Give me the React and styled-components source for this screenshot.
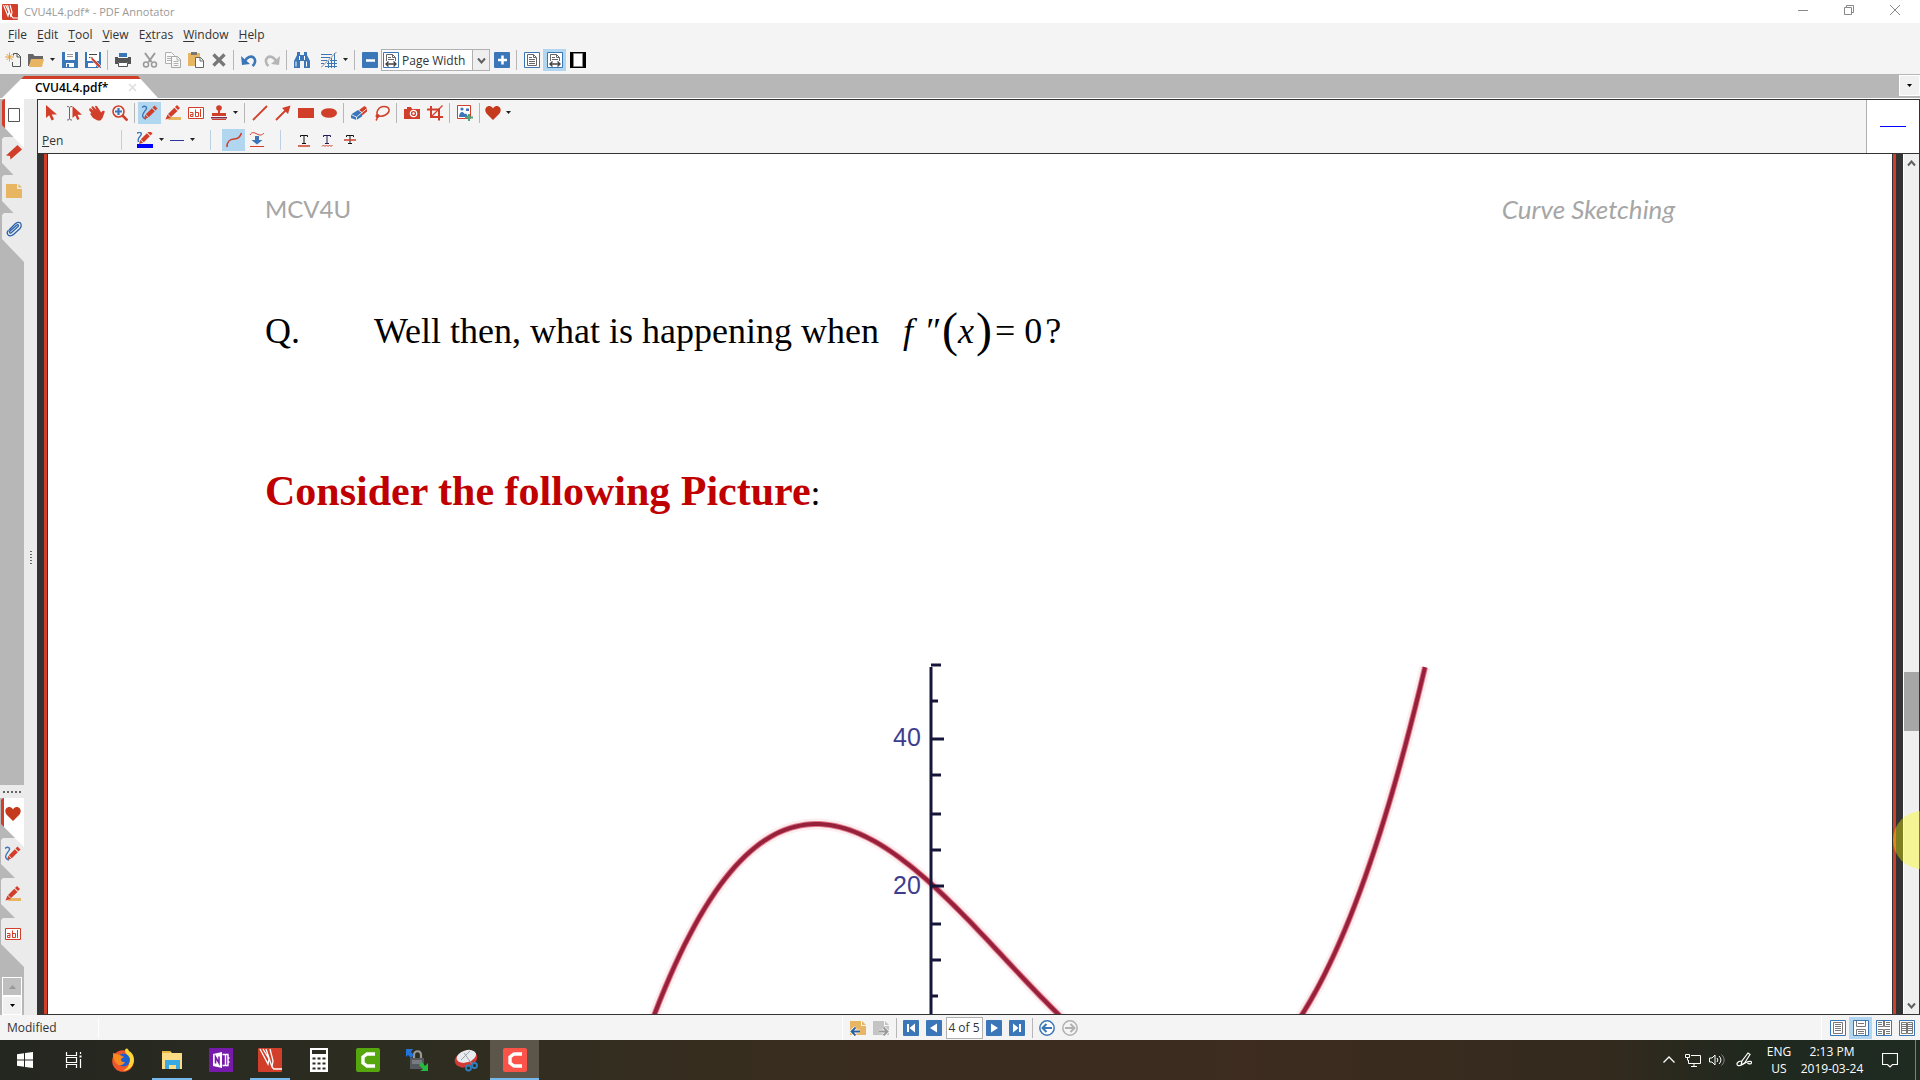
import React from "react";
import styled, { createGlobalStyle } from "styled-components";

const RED = "#d13f2a";
const BLUE = "#3a76b8";
const DARK = "#333333";
const LIT = "#b1d6f0";

const GlobalStyle = createGlobalStyle`
    * {
        box-sizing: border-box;
    }
    body {
        margin: 0;
        overflow: hidden;
        font-family: "Open Sans", "Noto Sans", sans-serif;
        font-size: 12px;
        color: #333;
    }
    button, select, input {
        font: inherit;
        color: inherit;
        border: 0;
        padding: 0;
        margin: 0;
        background: transparent;
    }
    svg {
        display: block;
        flex: none;
    }
`;

/* ---------- icons ---------- */

const Svg = ({ size = 16, box = 16, children }) => (
    <svg width={size} height={size} viewBox={`0 0 ${box} ${box}`} fill="none" aria-hidden="true">
        {children}
    </svg>
);

const Pencil = ({ x = 0, y = 0 }) => (
    <g transform={`translate(${x} ${y})`}>
        <path d="M12.5 0.5l3 3-2 2-3-3z" fill={RED} />
        <path d="M9.8 3.2l3 3-6 6-3-3z" fill={RED} />
        <path d="M3.2 9.8l3 3-4.2 1.2z" fill={RED} />
    </g>
);

const PageLines = () => (
    <>
        <path d="M.5.5h15v15H.5z" fill="#fff" stroke={BLUE} />
        <path d="M3.5 13.5v-11h6l3 3v8z" fill="#fff" stroke="#666" />
        <path d="M9.5 2.5v3h3M5 5.5h3M5 7.5h6M5 9.5h6M5 11.5h6" stroke="#666" />
    </>
);

const WidthLines = () => (
    <>
        <path d="M.5.5h15v15H.5z" fill="#fff" stroke={BLUE} />
        <path d="M3.5 9V2.5h6l3 3V9" stroke="#666" />
        <path d="M9.5 2.5v3h3M5 5.5h3M5 7.5h6" stroke="#666" />
        <path d="M3 12h10M5.5 9.5L3 12l2.5 2.5M10.5 9.5L13 12l-2.5 2.5" stroke="#444" strokeWidth="1.4" />
    </>
);

const icons = {
    app: (
        <>
            <rect width="16" height="16" rx="1" fill={RED} />
            <path d="M1.500 1l4.500 11 1-4-3.500-7M5.500 1l3.500 12 1-5-2-7M9.500 12l1.500 2h5" stroke="#fff" strokeWidth="1.1" />
        </>
    ),
    newDoc: (
        <>
            <path d="M8.5 3.5v-2h4l3 3v10h-8V10" stroke="#555" />
            <path d="M12 1.5V5h3.5" stroke="#555" />
            <path d="M4.5.5v9M0 5h9M1.5 2l6 6M7.5 2l-6 6" stroke="#e9a23b" />
        </>
    ),
    open: (
        <>
            <path d="M0 14V2h5l1.5 2H15v3H4l-3 7z" fill="#666" />
            <path d="M3 7h13l-2 8H1z" fill="#e8b563" />
        </>
    ),
    save: (
        <>
            <path d="M0 0h16v16H0z" fill={BLUE} />
            <path d="M3 0h10v8H3zM4 11h8v4H4z" fill="#fff" />
            <path d="M5 2.5h6M5 4.5h6" stroke="#999" />
            <path d="M5 12h2v3H5z" fill={BLUE} />
        </>
    ),
    saveMark: (
        <>
            <path d="M0 0h16v16H0z" fill={BLUE} />
            <path d="M2 0h12v9H2zM3 11h8v4H3z" fill="#fff" />
            <path d="M4 2.5h8M4 5.5h4" stroke="#444" />
            <path d="M5 4l1.500 4 7.500 8 2-2-8-8z" fill={RED} stroke="#fff" strokeWidth=".6" />
        </>
    ),
    print: (
        <>
            <path d="M4 1h8v4H4z" fill={BLUE} />
            <path d="M0 5h3v1h10V5h3v7h-3v-2H3v2H0z" fill="#555" />
            <path d="M3.5 10.5h9v4h-9z" fill="#fff" stroke="#555" />
        </>
    ),
    cut: (
        <>
            <path d="M3 1l6.5 9M13 1L6.5 10" stroke="#999" strokeWidth="2" />
            <circle cx="4" cy="12.5" r="2.5" stroke="#999" strokeWidth="1.5" />
            <circle cx="12" cy="12.5" r="2.5" stroke="#999" strokeWidth="1.5" />
        </>
    ),
    copy: (
        <>
            <path d="M.5.5h6l3 3v8h-9z" fill="#fafafa" stroke="#b0b0b0" />
            <path d="M6.5 4.5h6l3 3v8h-9z" fill="#fafafa" stroke="#a5a5a5" />
            <path d="M2 4.5h4M2 6.5h4M2 8.5h4M8.5 9.5h5M8.5 11.5h5M8.5 13.5h5M12 4.5V8h3.5" stroke="#b0b0b0" />
        </>
    ),
    paste: (
        <>
            <path d="M0 1h12v13H0z" fill="#e8b563" />
            <path d="M3 0h6v3H3z" fill="#777" />
            <path d="M7.5 5.5h5l3 3v7h-8z" fill="#fff" stroke="#666" />
            <path d="M12 5.5V9h3.5" stroke="#666" />
        </>
    ),
    del: <path d="M2.5 2.5l11 11M13.5 2.5l-11 11" stroke="#777" strokeWidth="3.2" />,
    undo: (
        <>
            <path d="M4 9C6 5 10 3.5 12.5 5.5s2 6-1 8.5" stroke={BLUE} strokeWidth="2.6" />
            <path d="M0 4l1 9 8-1z" fill={BLUE} />
        </>
    ),
    redo: (
        <>
            <path d="M12 9C10 5 6 3.5 3.5 5.5s-2 6 1 8.5" stroke="#b5b5b5" strokeWidth="2.6" />
            <path d="M16 4l-1 9-8-1z" fill="#b5b5b5" />
        </>
    ),
    find: (
        <>
            <path d="M3 0h3v3h4V0h3v3l3 6v7h-6V9H6v7H0V9l3-6z" fill={BLUE} />
            <path d="M2 9.5v5M12.5 9.5v5M5.500 4v4M10.5 4v4" stroke="#fff" />
        </>
    ),
    snap: (
        <>
            <path d="M0 2.5h11M0 5.5h9M0 8.5h6M0 11.5h3M13.5 1v15M10.5 6v10M7.5 9v7M4 14.5h12M6 11.5h10M9 8.5h7" stroke={BLUE} />
            <path d="M15.500 0L0 15.500" stroke="#888" />
        </>
    ),
    minus: (
        <>
            <rect width="16" height="16" rx="1" fill={BLUE} />
            <path d="M4 8.5h9" stroke="#fff" strokeWidth="2.5" />
        </>
    ),
    plus: (
        <>
            <rect width="16" height="16" rx="1" fill={BLUE} />
            <path d="M4 8h9M8.5 3.5v9" stroke="#fff" strokeWidth="2.5" />
        </>
    ),
    fitPage: <PageLines />,
    fitWidth: <WidthLines />,
    fullScreen: (
        <>
            <path d="M0 0h16v16H0z" fill="#000" />
            <path d="M3.5 1.5h9v13h-9z" fill="#fff" stroke="#888" />
        </>
    ),
    select: <path d="M3 0v13l3.2-2.8L8.5 15.5l2.6-1.2-2.4-4.8H14z" fill={RED} />,
    textSelect: (
        <>
            <path d="M1 1.5c1.5 0 2 .4 2.5 1 .5-.6 1-1 2.5-1M1 15c1.5 0 2-.4 2.5-1 .5.6 1 1 2.5 1M3.5 2.5V14" stroke="#666" />
            <path d="M6.5 1v12l2.8-2.5 2 4.5 2.2-1-2-4.3H16z" fill={RED} />
        </>
    ),
    hand: (
        <path
            d="M.5 3.5c1-.8 2 .2 4 2.3L2.5 2.500c0-1.500 1.500-1.500 2.300-.4L7.500 5 6 1.500C6.200.3 7.500.5 8.200 1.500l3 4.500 1 1.500c1-2 3.300-2.300 3.600-.7L13.500 13l-2 2.500H8.500L4 13 1.500 9.500c-.5-1 .3-1.500 1.200-1L.8 6C0 5 0 4 .5 3.500z"
            fill={RED}
        />
    ),
    zoomIn: (
        <>
            <circle cx="6.5" cy="6.5" r="5.5" stroke={RED} strokeWidth="1.6" />
            <path d="M10.5 10.5l5 5" stroke={RED} strokeWidth="2.6" />
            <path d="M3 6.5h7M6.5 3v7" stroke={BLUE} strokeWidth="2.2" />
        </>
    ),
    pen: (
        <>
            <path d="M0 2.500c3-2.500 5.500-.5 4 2S-.5 9 1 12c.5 1 1.500 2 3 2" stroke={BLUE} strokeWidth="1.4" />
            <Pencil />
        </>
    ),
    penColor: (
        <>
            <path d="M0 1.500c3-2.500 5-.5 4 1.500S0 6 1.500 10" stroke={BLUE} strokeWidth="1.4" />
            <Pencil y={-2} />
            <path d="M0 12h16v4H0z" fill="#0000ff" />
        </>
    ),
    marker: (
        <>
            <path d="M5 12h11v3H3z" fill="#e8b563" />
            <path d="M12 0l3 3-2 2-3-3zM9.3 2.7l3.2 3.2-6.500 6-3-3z" fill={RED} />
            <path d="M2.5 9.5L6 13 .5 14.500z" fill={RED} />
        </>
    ),
    textBox: (
        <>
            <path d="M.5 2.5h15v11H.5z" fill="#fff" stroke={RED} />
            <path d="M2 7.5h3v4H2.5v-2H5M7.5 4.5v7h3v-4h-3M12.5 4v8" stroke={RED} />
        </>
    ),
    stamp: (
        <>
            <circle cx="8" cy="3" r="2.8" fill={RED} />
            <path d="M7 5h2v3h6v3H1V8h6z" fill={RED} />
            <path d="M0 12h16v1.5H0z" fill="#7b2a52" />
            <path d="M1 14.5h14" stroke={RED} />
        </>
    ),
    line: <path d="M1 15L15 1" stroke={RED} strokeWidth="1.8" />,
    arrow: (
        <>
            <path d="M1 15L11 5" stroke={RED} strokeWidth="1.8" />
            <path d="M15.5.5L13 9 7 3z" fill={RED} />
        </>
    ),
    rect: <path d="M0 3h16v10H0z" fill={RED} />,
    ellipse: <ellipse cx="8" cy="8" rx="8" ry="4.8" fill={RED} />,
    eraser: (
        <>
            <path d="M8 5l5.500-4L16 3v3.500L11 10.500 7 7z" fill={RED} />
            <path d="M0 9.500L7 5l4 3v3.500L5.500 15 0 13z" fill={BLUE} />
            <path d="M0 9.500l5.500 2.500L16 3.500M5.500 12v3M7.500 5l4 3" stroke="#fff" strokeWidth=".8" />
        </>
    ),
    lasso: (
        <>
            <path d="M4 10.5C1.5 8 4 1.5 10 1.5c6.5 0 6.500 6 1.500 8.500-3 1.500-5.500 1.500-7.500.5zM3.500 10.500C3 12 4 13 2 15.500" stroke={RED} strokeWidth="1.5" />
            <circle cx="3.5" cy="11" r="2" fill={RED} />
        </>
    ),
    camera: (
        <>
            <path d="M0 4h3V2h4l1 2h8v10H0z" fill={RED} />
            <circle cx="9.5" cy="8.5" r="3.2" stroke="#fff" strokeWidth="1.2" />
            <circle cx="9.5" cy="8.5" r="1.2" fill="#fff" />
        </>
    ),
    crop: (
        <>
            <path d="M0 4.5h12v11M4 1v11h12" stroke={RED} strokeWidth="2" />
            <path d="M4 12L15.5.5" stroke={RED} strokeWidth="1.3" />
        </>
    ),
    image: (
        <>
            <path d="M.5.5h13v13H.5z" fill="#fff" stroke={RED} />
            <path d="M2 12c0-3 1.500-5 3-5s2 1 2.500 2L9 8.500l2.500 3.500z" fill={BLUE} />
            <circle cx="5" cy="4" r="1.6" fill={BLUE} />
            <path d="M9 3.5h3V6H9z" fill={BLUE} />
            <path d="M8 12.5h8M12 9v7" stroke="#4aa87c" strokeWidth="2" />
        </>
    ),
    heart: <path d="M8 15L1.5 8.5C-.5 6 0 2.500 2.500 1.500 5 .5 7 1.500 8 3.500c1-2 3-3 5.500-2C16 2.500 16.500 6 14.500 8.500z" fill="#c5391c" />,
    lineWidth: <path d="M1 8.5h14" stroke="#33339c" />,
    curve: <path d="M1 15C1 9 3.5 7.500 8 7s6-2 7.500-6" stroke={RED} strokeWidth="1.6" />,
    press: (
        <>
            <path d="M1 3C3-.5 5 .5 8 2s5 1.5 7-1" stroke={RED} />
            <path d="M6 4h4v4h3.5L8 12.500 2.500 8H6z" fill={BLUE} />
            <path d="M1 14.5h14" stroke={RED} />
        </>
    ),
    underline: (
        <>
            <path d="M4.500 5V3.500h7V5M8 3.500v8M6 11.500h4" stroke="#111" />
            <path d="M2 14h12" stroke={RED} strokeWidth="1.5" />
        </>
    ),
    squiggle: (
        <>
            <path d="M4.500 5V3.500h7V5M8 3.500v8M6 11.500h4" stroke="#221a55" />
            <path d="M3 14.500l1.500-1.500L6 14.500 7.500 13 9 14.500l1.500-1.500 1.500 1.500 1.500-1.500" stroke={RED} />
        </>
    ),
    strike: (
        <>
            <path d="M4.500 5V3.500h7V5M8 3.500v8M6 11.500h4" stroke="#111" />
            <path d="M2 8h12" stroke={RED} strokeWidth="1.5" />
        </>
    ),
    thumbs: <path d="M2.5 1.5h11v13h-11z" fill="#fff" stroke="#555" />,
    bookmark: <path d="M11.5 0L16 4.5 4.500 14.500 4 11 0 10.500z" fill={RED} />,
    note: (
        <>
            <path d="M0 1h11v5h5v9H0z" fill="#e8b563" />
            <path d="M12.5 1L16 4.5h-3.5z" fill="#e8b563" />
        </>
    ),
    clip: (
        <path
            d="M3 9l6-6c2-2 4.500-2 5.500-.8S15.500 6 14 7.500l-6.500 6c-2 1.800-4.500 1.500-5.500.3s-1-3 .5-4.600M5 12l7-6.500c1-1 0-2.500-1.200-1.500L4 10c-1 1.200 0 2.800 1 2z"
            stroke="#2a62ad"
            strokeWidth="1.3"
        />
    ),
    pageBack: (
        <>
            <path d="M0 1h11v5h5v9H0z" fill="#e8b563" />
            <path d="M12 1l4 4h-4z" fill="#e8b563" />
            <path d="M10 11.5H2M5.5 7.500l-4 4 4 4" stroke="#fff" strokeWidth="3.5" />
            <path d="M10 11.5H2M5.5 7.500l-4 4 4 4" stroke="#2a5f9e" strokeWidth="1.8" />
        </>
    ),
    pageForward: (
        <>
            <path d="M0 1h11v5h5v9H0z" fill="#c4c4c4" />
            <path d="M12 1l4 4h-4z" fill="#c4c4c4" />
            <path d="M6 11.5h8M10.5 7.500l4 4-4 4" stroke="#f4f4f4" strokeWidth="3.5" />
            <path d="M6 11.5h8M10.5 7.500l4 4-4 4" stroke="#999" strokeWidth="1.8" />
        </>
    ),
    first: (
        <>
            <rect width="16" height="16" rx="1" fill={BLUE} />
            <path d="M4 4h2v8H4zM12 3.5v9L6.500 8z" fill="#fff" />
        </>
    ),
    prev: (
        <>
            <rect width="16" height="16" rx="1" fill={BLUE} />
            <path d="M11 3.5v9L4 8z" fill="#fff" />
        </>
    ),
    next: (
        <>
            <rect width="16" height="16" rx="1" fill={BLUE} />
            <path d="M5 3.5v9L12 8z" fill="#fff" />
        </>
    ),
    last: (
        <>
            <rect width="16" height="16" rx="1" fill={BLUE} />
            <path d="M10 4h2v8h-2zM4 3.5v9L9.500 8z" fill="#fff" />
        </>
    ),
    back: (
        <>
            <circle cx="8" cy="8" r="7.2" fill="#fff" stroke={BLUE} strokeWidth="1.5" />
            <path d="M13 8H4M7.5 4l-4 4 4 4" stroke={BLUE} strokeWidth="2" />
        </>
    ),
    forward: (
        <>
            <circle cx="8" cy="8" r="7.2" stroke="#b0b0b0" strokeWidth="1.5" />
            <path d="M3 8h9M8.5 4l4 4-4 4" stroke="#b0b0b0" strokeWidth="2" />
        </>
    ),
    single: (
        <>
            <path d="M.5.5h15v15H.5z" fill="#fff" stroke={BLUE} />
            <path d="M3.5 2.5h9v11h-9zM5 4.500h6M5 6.500h6M5 8.500h6M5 10.500h6" stroke="#777" />
        </>
    ),
    continuous: (
        <>
            <path d="M.5.5h15v15H.5z" fill="#fff" stroke={BLUE} />
            <path d="M3.5 1v5.500h9V1M5 3.500h6M3.500 15V9.500h9V15M5 11.500h6M5 13.500h6" stroke="#777" />
        </>
    ),
    grid: (
        <>
            <path d="M.5.5h15v15H.5z" fill="#fff" stroke={BLUE} />
            <path d="M2 6.5h5.500V1M14 6.500H8.500V1M2 9.500h5.500V15M14 9.500H8.500V15M2 2.500h4M10 2.500h4M2 4.500h4M10 4.500h4M2 11.500h4M10 11.500h4M2 13.500h4M10 13.500h4" stroke="#777" />
        </>
    ),
    spread: (
        <>
            <path d="M.5.5h15v15H.5z" fill="#fff" stroke={BLUE} />
            <path d="M2.5 2.5h5v11h-5zM8.500 2.500h5v11h-5zM3 4.500h4M3 6.500h4M3 8.500h4M3 10.500h4M9 4.500h4M9 6.500h4M9 8.500h4M9 10.500h4" stroke="#777" />
        </>
    ),
};

// 24px drawings for the task bar
const taskIcons = {
    start: <path d="M4 6.2l7-1v6.300H4zM12 5l8-1v7.500h-8zM4 12.500h7v6.300l-7-1zM12 12.500h8V20l-8-1z" fill="#fff" />,
    taskView: (
        <>
            <path d="M4.5 4v3.500h10V4M4.500 20v-3.500h10V20M4.500 9.500h10v5h-10zM18.500 4v2M18.500 11v9" stroke="#fff" strokeWidth="1.2" />
            <path d="M17.5 7.5h2v2h-2z" fill="#fff" />
        </>
    ),
    firefox: (
        <>
            <circle cx="12" cy="13" r="10.8" fill="#f0562c" />
            <path d="M14 2c2-3 3-1 4 1 4 2 6 7 4.500 12-2 6-7 8-11 7.500 6-2 8-7 6-12C17 6 14 6 14 2z" fill="#ffd633" />
            <circle cx="12.5" cy="12" r="6.5" fill="#1c5fd0" />
            <path d="M2 5c2 1 5 1 7 2l4 2-3 2c0 3 2 3 4 3-2 4-6 4-8 2-3-3-4-6-4-11z" fill="#fb8a1e" />
        </>
    ),
    explorer: (
        <>
            <path d="M2 3h8l2 2h10v16H2z" fill="#fbdc85" />
            <path d="M2 3h8v2H2z" fill="#e8b93f" />
            <path d="M5 12h15v9h-4v-4H9v4H5z" fill="#38a9e4" />
        </>
    ),
    onenote: (
        <>
            <path d="M0 0h24v24H0z" fill="#7719aa" />
            <path d="M13.500 6.500h5.500v11h-5.500M16.500 6.500v11M19 10h1.500M19 14h1.500" stroke="#fff" strokeWidth="1.4" />
            <path d="M4 6l9-2v16l-9-2z" fill="#fff" />
            <path d="M6.500 15.500V9l3.500 6V8.500" stroke="#7719aa" strokeWidth="1.6" />
        </>
    ),
    annotator: (
        <>
            <rect width="24" height="24" rx="1" fill={RED} />
            <path d="M2 1l8 15 1-5-6-10M8 1l6 18 1-6-3-12M14 19l2 2h8" stroke="#fff" strokeWidth="1.3" />
        </>
    ),
    calc: (
        <>
            <path d="M3 0h18v24H3z" fill="#fff" />
            <path d="M5 2h14v4H5z" fill="#2d2c22" />
            <path d="M5.500 10.500h13M5.500 15.500h13M5.500 20.500h13" stroke="#2d2c22" strokeWidth="2.200" strokeDasharray="3 2" />
        </>
    ),
    camGreen: (
        <>
            <rect width="24" height="24" rx="2" fill="#56a70e" />
            <path d="M19 6h-8L7 9v6l4 3h8" stroke="#fff" strokeWidth="3.4" />
        </>
    ),
    lock: (
        <>
            <path d="M9 11V7c0-5 7-5 7 0v4" stroke="#999" strokeWidth="2.2" />
            <path d="M5 10h14v11H5z" fill="#55585c" />
            <path d="M7 12h10v4H7z" fill="#777b80" />
            <path d="M1 1h7L6 4l3 3-3 3-3-3-2 2z" fill="#2373d8" />
            <path d="M23 23h-8l3-2-4-4 3-3 3 4 3-3z" fill="#24bd3f" />
        </>
    ),
    snip: (
        <>
            <ellipse cx="12" cy="11" rx="11.5" ry="8" fill="#d33a35" transform="rotate(-18 12 11)" />
            <ellipse cx="12.5" cy="8.5" rx="10" ry="6" fill="#e9ecee" transform="rotate(-18 12 9)" />
            <path d="M7 12l9-9M10 5l8 11" stroke="#9aa1a8" />
            <circle cx="14.5" cy="20" r="2.5" stroke="#2c80bd" strokeWidth="1.8" />
            <circle cx="20.5" cy="17.5" r="2.5" stroke="#2c80bd" strokeWidth="1.8" />
        </>
    ),
    camRed: (
        <>
            <rect width="24" height="24" rx="2" fill="#fb5347" />
            <path d="M19 6h-8L7 9v6l4 3h8" stroke="#fff" strokeWidth="3.4" />
        </>
    ),
};

/* ---------- window chrome ---------- */

const Window = styled.div`
    position: relative;
    display: flex;
    flex-direction: column;
    height: 100vh;
    overflow: hidden;
    background: #f4f4f4;
`;

const TitleBar = styled.header`
    display: flex;
    align-items: center;
    height: 23px;
    padding: 0 2px;
    background: #fff;
    color: #999;
`;

const Title = styled.h1`
    flex: 1;
    margin: 0 0 0 6px;
    font-size: 11px;
    line-height: 18px;
    font-weight: 400;
`;

const Caption = styled.button`
    display: flex;
    justify-content: center;
    width: 46px;
    padding-bottom: 4px;
`;

const MenuBar = styled.nav`
    display: flex;
    align-items: center;
    gap: 10px;
    height: 24px;
    padding-left: 8px;
`;

const MenuButton = styled.button`
    line-height: 16px;
    u {
        text-underline-offset: 2px;
    }
`;

const Tools = styled.div`
    display: flex;
    align-items: center;
    height: 27px;
    padding: 0 0 1px ${(p) => p.$start || 0}px;
`;

const ToolButton = styled.button`
    display: flex;
    align-items: center;
    justify-content: center;
    width: ${(p) => p.$width || 23}px;
    height: 22px;
    background: ${(p) => (p.$active ? LIT : "transparent")};
`;

const CaretButton = styled.button`
    width: 11px;
    height: 22px;
    display: flex;
    align-items: center;
    justify-content: center;
`;

const Separator = styled.span`
    width: ${(p) => p.$width || 7}px;
    height: 20px;
    display: flex;
    justify-content: center;
    &::before {
        content: "";
        width: 1px;
        background: ${(p) => p.$color || "#b7b7b7"};
    }
`;

const Spacer = styled.span`
    width: 4px;
`;

const Combo = styled.label`
    display: flex;
    align-items: center;
    width: 109px;
    height: 22px;
    padding-left: 1px;
    border: 1px solid #b0b0b0;
    background: #fff;
    select {
        appearance: none;
        flex: 1;
        min-width: 0;
        padding-left: 3px;
        outline: 0;
    }
`;

const ComboArrow = styled.span`
    display: flex;
    align-items: center;
    justify-content: center;
    align-self: stretch;
    width: 17px;
    border-left: 1px solid #b0b0b0;
    background: #efefef;
`;

const TabStrip = styled.div`
    display: flex;
    align-items: flex-end;
    justify-content: space-between;
    height: 25px;
    padding-left: 2px;
    background: #b7b7b7;
    border-bottom: 1px solid #fff;
`;

const DocTab = styled.button`
    display: flex;
    align-items: center;
    gap: 20px;
    width: 156px;
    height: 22px;
    padding: 1px 0 0 33px;
    font-weight: 600;
    color: #000;
    background: linear-gradient(${RED} 3px, #fff 3px);
    clip-path: polygon(22px 0, 136px 0, 156px 100%, 0 100%);
`;

const TabList = styled.button`
    display: flex;
    align-items: center;
    justify-content: center;
    width: 21px;
    height: 21px;
    margin-bottom: 2px;
    border: 1px solid #fff;
    background: #f0f0f0;
`;

const Body = styled.div`
    display: flex;
    flex: 1;
    min-height: 0;
`;

const Side = styled.aside`
    display: flex;
    flex-direction: column;
    justify-content: space-between;
    width: 24px;
    background: #b7b7b7;
`;

const SideGroup = styled.div`
    display: flex;
    flex-direction: column;
    padding-left: ${(p) => p.$inset}px;
`;

const SideTab = styled.button`
    display: flex;
    align-items: flex-start;
    position: relative;
    z-index: ${(p) => (p.$active ? 1 : 0)};
    height: 49px;
    margin-bottom: ${(p) => p.$pitch - 49}px;
    padding: 8px 0 0 4px;
    background: ${(p) => (p.$active ? `linear-gradient(90deg, ${RED} 3px, #fff 3px)` : "#ebebeb")};
    clip-path: polygon(0 2px, 2px 0, 100% 0, 100% 100%, 0 26px);
    &:last-of-type {
        margin-bottom: 0;
    }
`;

const Grip = styled.div`
    display: flex;
    flex-direction: ${(p) => (p.$vertical ? "column" : "row")};
    align-items: center;
    justify-content: center;
    gap: 2px;
    height: 13px;
    background: #ebebeb;
    i {
        width: 2px;
        height: 2px;
        background: #666;
    }
`;

const SideScroll = styled.div`
    display: flex;
    flex-direction: column;
    padding: 10px 2px 0;
    button {
        display: flex;
        align-items: center;
        justify-content: center;
        height: 19px;
        border: 1px solid #fff;
        background: #f0f0f0;
    }
    button:disabled {
        background: #bfbfbf;
    }
`;

const Splitter = styled.div`
    display: flex;
    align-items: center;
    justify-content: center;
    width: 13px;
    background: #ebebeb;
`;

const Main = styled.main`
    display: flex;
    flex-direction: column;
    flex: 1;
    min-width: 0;
    border: 1px solid ${DARK};
`;

const ToolPanel = styled.section`
    display: flex;
    justify-content: space-between;
    height: 54px;
    border-bottom: 1px solid ${DARK};
`;

const ToolLabel = styled.span`
    width: 71px;
    padding-left: 4px;
`;

const Preview = styled.div`
    display: flex;
    align-items: center;
    justify-content: center;
    width: 53px;
    border-left: 1px solid #b0b0b0;
    background: #fff;
    &::before {
        content: "";
        width: 26px;
        height: 1px;
        background: #0000ff;
    }
`;

/* ---------- document ---------- */

const Viewer = styled.div`
    display: flex;
    flex: 1;
    min-height: 0;
    padding-left: 6px;
    background: ${DARK};
`;

const Page = styled.article`
    flex: 1;
    min-width: 0;
    overflow: hidden;
    padding: 37px 218px 0;
    background: #fff;
    border: solid ${RED};
    border-width: 0 3px;
    box-shadow: inset 1px 0 ${DARK}, inset -1px 0 ${DARK};
    font-family: "Liberation Serif", serif;
    color: #000;
`;

const RunningHead = styled.div`
    display: flex;
    justify-content: space-between;
    font-family: Lato, sans-serif;
    font-size: 24px;
    line-height: 36px;
    color: #a6a6a6;
    em {
        font-size: 26px;
    }
`;

const Question = styled.p`
    display: flex;
    align-items: baseline;
    margin: 82px 0 0;
    font-size: 36px;
    line-height: 44px;
    white-space: nowrap;
`;

const QuestionMark = styled.span`
    width: 109px;
`;

const Formula = styled.span`
    display: flex;
    align-items: baseline;
    gap: 3px;
    margin-left: 24px;
`;

const Prime = styled.i`
    margin-left: 8px;
`;

const Paren = styled.span`
    font-size: 48px;
    line-height: 36px;
    vertical-align: -3px;
`;

const Variable = styled.i`
    margin-right: 2px;
`;

const PageTitle = styled.h2`
    margin: 112px 0 0;
    font-size: 42px;
    line-height: 52px;
    color: #c00000;
    white-space: nowrap;
    span {
        font-size: 36px;
        font-weight: 400;
        color: #000;
    }
`;

const Figure = styled.figure`
    display: flex;
    justify-content: center;
    margin: 121px 0 0;
`;

const ScrollBar = styled.div`
    display: grid;
    grid-template-rows: 18px 500fr 59px 265fr 18px;
    width: 16px;
    margin-left: 7px;
    border-left: 1px solid #fff;
    background: #efefef;
    button {
        display: flex;
        align-items: center;
        justify-content: center;
    }
`;

const Thumb = styled.span`
    grid-row: 3;
    background: #a6a6a6;
`;

const DownButton = styled.button`
    grid-row: 5;
`;

/* ---------- status bar and task bar ---------- */

const StatusBar = styled.footer`
    display: grid;
    grid-template-columns: 1fr auto 1fr;
    align-items: center;
    height: 25px;
    padding-left: 3px;
`;

const StatusText = styled.span`
    width: 96px;
    padding-left: 4px;
    line-height: 20px;
    border-right: 1px solid #fff;
`;

const StatusTools = styled.div`
    display: flex;
    align-items: center;
    justify-self: ${(p) => (p.$end ? "end" : "center")};
    padding: 0 ${(p) => (p.$end ? 2 : 0)}px 0 4px;
    border-left: 1px solid #fff;
`;

const PageInput = styled.input`
    && {
        width: 37px;
        height: 22px;
        border: 1px solid #b0b0b0;
        background: #fff;
        text-align: center;
    }
`;

const TaskBar = styled.div`
    display: flex;
    justify-content: space-between;
    height: 40px;
    color: #fff;
    background: linear-gradient(90deg, #242620 0%, #2d2d21 20%, #382d1f 40%, #3d2c1f 65%, #332a1e 84%, #20281e 91%, #1f2b21 100%);
`;

const TaskGroup = styled.div`
    display: flex;
    align-items: center;
`;

const TaskButton = styled.button`
    display: flex;
    align-items: center;
    justify-content: center;
    width: 49px;
    height: 40px;
    background-color: ${(p) => (p.$active ? "#5b554a" : "transparent")};
    background-image: ${(p) => (p.$bar ? "linear-gradient(#76b9ed, #76b9ed)" : "none")};
    background-size: ${(p) => p.$bar}px 2px;
    background-position: center bottom;
    background-repeat: no-repeat;
`;

const TrayButton = styled.button`
    display: flex;
    flex-direction: column;
    align-items: center;
    justify-content: center;
    width: ${(p) => p.$width}px;
    height: 40px;
    line-height: 17px;
    white-space: nowrap;
`;

const ShowDesktop = styled.button`
    && {
        width: 5px;
        height: 40px;
        border-left: 1px solid #7d827a;
    }
`;

const PointerHalo = styled.div`
    position: absolute;
    top: 811px;
    right: -31px;
    width: 58px;
    height: 58px;
    border-radius: 50%;
    background: rgba(252, 252, 0, 0.38);
    pointer-events: none;
`;

const Caret = ({ color = "#222", up }) => (
    <svg width="7" height="4" viewBox="0 0 7 4" aria-hidden="true">
        <path d={up ? "M0 4h7L3.5 0z" : "M1 0h5L3.5 3z"} fill={color} />
    </svg>
);

const Chevron = ({ up }) => (
    <svg width="9" height="7" viewBox="0 0 9 7" fill="none" aria-hidden="true">
        <path d={up ? "M1 5.5l3.5-4 3.5 4" : "M1 1.5l3.5 4 3.5-4"} stroke="#606060" strokeWidth="2" />
    </svg>
);

const Tool = ({ icon, label, active, width }) => (
    <ToolButton aria-label={label} $active={active} $width={width}>
        <Svg>{icons[icon]}</Svg>
    </ToolButton>
);

// "|" draws a separator, "v" a drop-down caret, "_" a small gap
const renderTools = (list, active) =>
    list.map((name, i) => {
        if (name === "|") return <Separator key={i} />;
        if (name === "_") return <Spacer key={i} />;
        if (name === "v") return <CaretButton key={i} aria-label="More"><Caret /></CaretButton>;
        return <Tool key={i} icon={name} label={name} active={name === active} width={name === "heart" ? 20 : 23} />;
    });

const menus = ["File", "Edit", "Tool", "View", "Extras", "Window", "Help"];
const menuKey = { Extras: 1 };

// the cubic, in drawing units, with the y axis at x = 931
const cubic = (x) => {
    const t = x - 931;
    return 1013 - 0.00001 * (t + 276) * (t - 126) * (t - 372);
};

const plot = (from, to) => {
    const pts = [];
    for (let x = from; x <= to; x += 5) {
        pts.push(`${x},${cubic(x).toFixed(1)}`);
    }
    return pts.join(" ");
};

const branches = [plot(645, 1080), plot(1285, 1425)];

const ticks = [[665, 10], [701, 7], [739, 13], [775, 10], [814, 10], [850, 10], [886, 13], [924, 10], [960, 10], [996, 7]];

const Graph = () => (
    <svg width="920" height="400" viewBox="510 640 920 400" fill="none" role="img" aria-label="Graph of a cubic function">
        {branches.map((points, i) => (
            <g key={i}>
                <polyline points={points} stroke="#fdeef0" strokeWidth="11" />
                <polyline points={points} stroke="#e0798c" strokeWidth="6" />
                <polyline points={points} stroke="#97213a" strokeWidth="4" />
            </g>
        ))}
        <path d="M931 667v373" stroke="#16163a" strokeWidth="3" />
        {ticks.map(([y, w]) => (
            <path key={y} d={`M931 ${y}h${w}`} stroke="#16163a" strokeWidth="3" />
        ))}
        <g fill="#3d3d8f" fontFamily="Liberation Sans, sans-serif" fontSize="25">
            <text x="893" y="746">40</text>
            <text x="893" y="894">20</text>
        </g>
    </svg>
);

const App = () => (
    <Window>
        <GlobalStyle />
        <TitleBar>
            <Svg>{icons.app}</Svg>
            <Title>CVU4L4.pdf* - PDF Annotator</Title>
            <Caption aria-label="Minimize">
                <Svg size={10} box={10}><path d="M0 5.5h10" stroke="#888" /></Svg>
            </Caption>
            <Caption aria-label="Restore">
                <Svg size={10} box={10}><path d="M.5 2.5h7v7h-7zM2.500 2.500v-2h7v7h-2" stroke="#888" /></Svg>
            </Caption>
            <Caption aria-label="Close">
                <Svg size={10} box={10}><path d="M0 0l10 10M10 0L0 10" stroke="#888" /></Svg>
            </Caption>
        </TitleBar>

        <MenuBar>
            {menus.map((name) => {
                const k = menuKey[name] || 0;
                return (
                    <MenuButton key={name}>{name.slice(0, k)}<u>{name[k]}</u>{name.slice(k + 1)}</MenuButton>
                );
            })}
        </MenuBar>

        <Tools $start={1}>
            {renderTools([
                "newDoc", "open", "v", "save", "saveMark", "|", "print", "_", "cut", "copy", "paste", "del", "|",
                "undo", "redo", "|", "find", "_", "snap", "v", "|", "minus",
            ])}
            <Combo>
                <Svg><WidthLines /></Svg>
                <select aria-label="Zoom" defaultValue="Page Width">
                    <option>Page Width</option>
                    <option>Full Page</option>
                </select>
                <ComboArrow><Chevron /></ComboArrow>
            </Combo>
            {renderTools(["plus", "|", "fitPage", "fitWidth", "fullScreen"], "fitWidth")}
        </Tools>

        <TabStrip>
            <DocTab>
                CVU4L4.pdf*
                <Svg size={9} box={9}><path d="M1 1l7 7M8 1L1 8" stroke="#ddd" strokeWidth="1.5" /></Svg>
            </DocTab>
            <TabList aria-label="Open documents"><Caret color="#000" /></TabList>
        </TabStrip>

        <Body>
            <Side>
                <SideGroup $inset={2}>
                    <SideTab $active $pitch={38} aria-label="Pages"><Svg>{icons.thumbs}</Svg></SideTab>
                    <SideTab $pitch={38} aria-label="Bookmarks"><Svg>{icons.bookmark}</Svg></SideTab>
                    <SideTab $pitch={38} aria-label="Notes"><Svg>{icons.note}</Svg></SideTab>
                    <SideTab $pitch={38} aria-label="Attachments"><Svg>{icons.clip}</Svg></SideTab>
                </SideGroup>
                <div>
                    <Grip><i /><i /><i /><i /><i /></Grip>
                    <SideGroup $inset={1}>
                        <SideTab $active $pitch={40} aria-label="Favorites"><Svg>{icons.heart}</Svg></SideTab>
                        <SideTab $pitch={40} aria-label="Pens"><Svg>{icons.pen}</Svg></SideTab>
                        <SideTab $pitch={40} aria-label="Markers"><Svg>{icons.marker}</Svg></SideTab>
                        <SideTab $pitch={40} aria-label="Text"><Svg>{icons.textBox}</Svg></SideTab>
                    </SideGroup>
                    <SideScroll>
                        <button disabled aria-label="Scroll up"><Caret up color="#999" /></button>
                        <button aria-label="Scroll down"><Caret color="#000" /></button>
                    </SideScroll>
                </div>
            </Side>
            <Splitter><Grip $vertical><i /><i /><i /><i /><i /></Grip></Splitter>

            <Main>
                <ToolPanel>
                    <div>
                        <Tools $start={1}>
                            {renderTools([
                                "select", "textSelect", "hand", "zoomIn", "|", "pen", "marker", "textBox", "stamp", "v", "|",
                                "line", "arrow", "rect", "ellipse", "|", "eraser", "lasso", "|", "camera", "crop", "|",
                                "image", "|", "heart", "v",
                            ], "pen")}
                        </Tools>
                        <Tools>
                            <ToolLabel><u>P</u>en</ToolLabel>
                            <Separator $width={24} $color="#bcd0e4" />
                            <Tool icon="penColor" label="Pen color" />
                            <CaretButton aria-label="More colors"><Caret /></CaretButton>
                            <Tool icon="lineWidth" label="Line width" width={20} />
                            <CaretButton aria-label="More widths"><Caret /></CaretButton>
                            <Separator $width={24} $color="#bcd0e4" />
                            <Tool icon="curve" label="Smooth" active />
                            <Tool icon="press" label="Pressure" />
                            <Separator $width={24} $color="#bcd0e4" />
                            <Tool icon="underline" label="Underline" />
                            <Tool icon="squiggle" label="Squiggly underline" />
                            <Tool icon="strike" label="Strike through" />
                        </Tools>
                    </div>
                    <Preview />
                </ToolPanel>

                <Viewer>
                    <Page>
                        <RunningHead>
                            <span>MCV4U</span>
                            <em>Curve Sketching</em>
                        </RunningHead>
                        <Question>
                            <QuestionMark>Q.</QuestionMark>
                            <span>Well then, what is happening when</span>
                            <Formula>
                                <i>f</i>
                                <Prime>″</Prime>
                                <span>
                                    <Paren>(</Paren>
                                    <Variable>x</Variable>
                                    <Paren>)</Paren>
                                </span>
                                <span>= 0</span>
                                <span>?</span>
                            </Formula>
                        </Question>
                        <PageTitle>Consider the following Picture<span>:</span></PageTitle>
                        <Figure><Graph /></Figure>
                    </Page>
                    <ScrollBar>
                        <button aria-label="Scroll up"><Chevron up /></button>
                        <Thumb />
                        <DownButton aria-label="Scroll down"><Chevron /></DownButton>
                    </ScrollBar>
                </Viewer>
            </Main>
        </Body>

        <StatusBar>
            <StatusText>Modified</StatusText>
            <StatusTools>
                {renderTools(["pageBack", "pageForward", "|", "first", "prev"])}
                <PageInput aria-label="Page" defaultValue="4 of 5" />
                {renderTools(["next", "last", "|", "back", "forward"])}
            </StatusTools>
            <StatusTools $end>
                {renderTools(["single", "continuous", "grid", "spread"], "continuous")}
            </StatusTools>
        </StatusBar>

        <TaskBar>
            <TaskGroup>
                {Object.keys(taskIcons).map((name) => (
                    <TaskButton
                        key={name}
                        aria-label={name}
                        $active={name === "camRed"}
                        $bar={{ explorer: 40, annotator: 40, camRed: 49 }[name]}
                    >
                        <Svg size={24} box={24}>{taskIcons[name]}</Svg>
                    </TaskButton>
                ))}
            </TaskGroup>
            <TaskGroup>
                <TrayButton $width={24} aria-label="Hidden icons">
                    <Svg><path d="M2.5 10.5L8 5l5.500 5.500" stroke="#fff" strokeWidth="1.3" /></Svg>
                </TrayButton>
                <TrayButton $width={24} aria-label="Network">
                    <Svg>
                        <path d="M6 3.5h9.500v8h-12V8M9 11.500v3M6 14.500h6M.5 2.500h4v3h-4zM2.500 5.500v3" stroke="#fff" />
                    </Svg>
                </TrayButton>
                <TrayButton $width={24} aria-label="Volume">
                    <Svg>
                        <path d="M.5 6v4H3l3 3V3L3 6zM8 6c1 1.500 1 2.500 0 4M10 4c2.500 2.500 2.500 5.500 0 8" stroke="#fff" />
                        <path d="M12.5 2.5c3.500 3.500 3.500 7.500 0 11" stroke="#888" />
                    </Svg>
                </TrayButton>
                <TrayButton $width={30} aria-label="Ink">
                    <Svg>
                        <path d="M5 13l1-4 6-8 2 1.500-5.500 8.500zM5.500 9C1 9 0 12.500 2 13.500s4-1 8-3 6-1 5.500.5-3 1-4 0" stroke="#fff" strokeWidth="1.2" />
                    </Svg>
                </TrayButton>
                <TrayButton $width={40} aria-label="Language"><span>ENG</span><span>US</span></TrayButton>
                <TrayButton $width={66} aria-label="Clock"><span>2:13 PM</span><span>2019-03-24</span></TrayButton>
                <TrayButton $width={50} aria-label="Notifications">
                    <Svg><path d="M.5 1.5h15v11h-5L8 15l-2.500-2.500h-5z" stroke="#fff" strokeWidth="1.2" /></Svg>
                </TrayButton>
                <ShowDesktop aria-label="Show desktop" />
            </TaskGroup>
        </TaskBar>
        <PointerHalo />
    </Window>
);

export default App;
